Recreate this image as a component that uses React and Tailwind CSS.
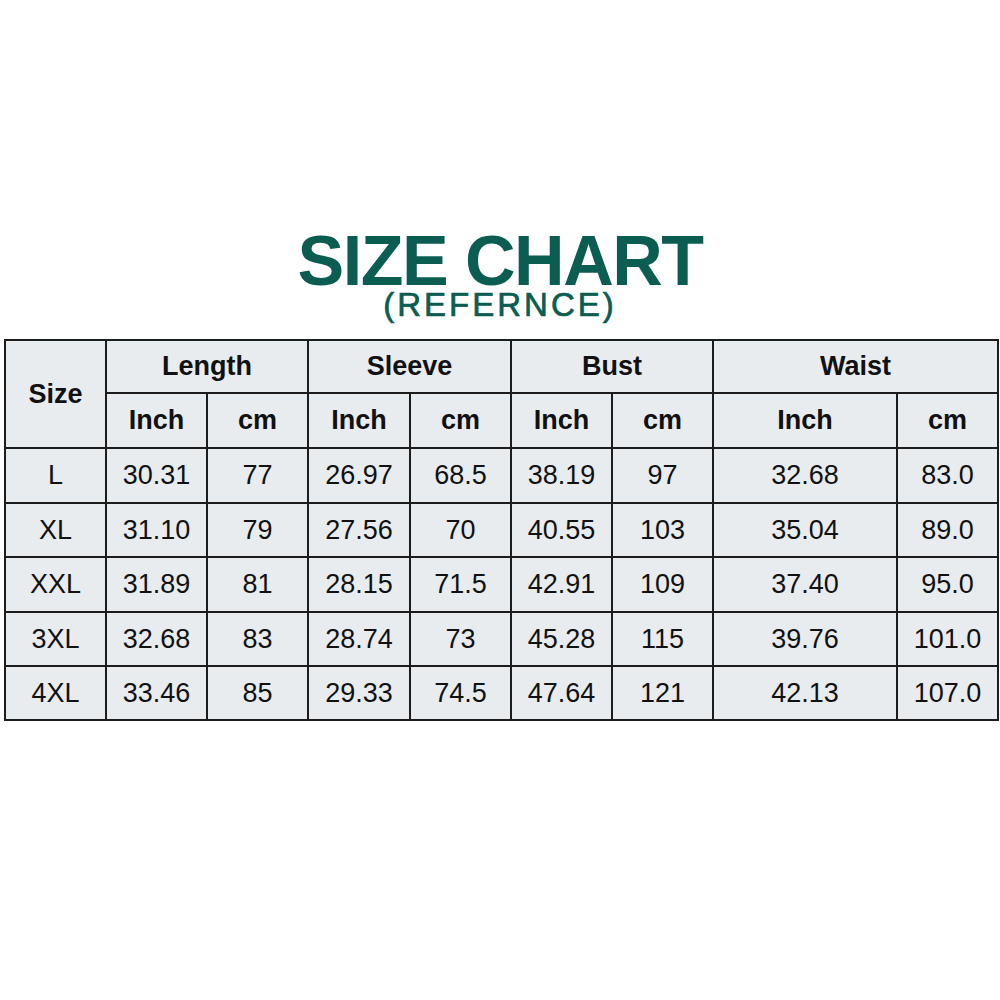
import React from "react";

const rows = [
  ["L", "30.31", "77", "26.97", "68.5", "38.19", "97", "32.68", "83.0"],
  ["XL", "31.10", "79", "27.56", "70", "40.55", "103", "35.04", "89.0"],
  ["XXL", "31.89", "81", "28.15", "71.5", "42.91", "109", "37.40", "95.0"],
  ["3XL", "32.68", "83", "28.74", "73", "45.28", "115", "39.76", "101.0"],
  ["4XL", "33.46", "85", "29.33", "74.5", "47.64", "121", "42.13", "107.0"],
];
const rowH = ["h-[55px]", "h-[54px]", "h-[55px]", "h-[54px]", "h-[54px]"];
const widths = [101, 101, 101, 102, 101, 101, 101, 184, 101];

const cell = "border-2 border-[#1c1c1c] bg-[#e9ecef] text-center align-middle p-0";

export default function App() {
  return (
    <div className="w-[1000px] h-[1000px] bg-white font-['Liberation_Sans',Arial,sans-serif] text-[#111]">
      <div className="pt-[231px] text-center text-[70px] leading-[60px] font-bold tracking-[-1.5px] text-[#0b5d51]">
        SIZE CHART
      </div>
      <div className="mt-[2px] text-center text-[33px] leading-[24px] tracking-[3px] text-[#0b5d51] [-webkit-text-stroke:0.7px_#0b5d51]">
        (REFERNCE)
      </div>
      <div className="mt-[22px] ml-[4px]">
        <table className="border-collapse table-fixed w-[993px] text-[27px]">
          <colgroup>
            {widths.map((w, i) => (
              <col key={i} style={{ width: w }} />
            ))}
          </colgroup>
          <tbody>
            <tr className="h-[53px]">
              <td rowSpan={2} className={cell + " font-bold"}>Size</td>
              <td colSpan={2} className={cell + " font-bold"}>Length</td>
              <td colSpan={2} className={cell + " font-bold"}>Sleeve</td>
              <td colSpan={2} className={cell + " font-bold"}>Bust</td>
              <td colSpan={2} className={cell + " font-bold"}>Waist</td>
            </tr>
            <tr className="h-[55px]">
              {["Inch", "cm", "Inch", "cm", "Inch", "cm", "Inch", "cm"].map((t, i) => (
                <td key={i} className={cell + " font-bold"}>{t}</td>
              ))}
            </tr>
            {rows.map((r, ri) => (
              <tr key={ri} className={rowH[ri]}>
                {r.map((v, ci) => (
                  <td key={ci} className={cell}>{v}</td>
                ))}
              </tr>
            ))}
          </tbody>
        </table>
      </div>
    </div>
  );
}
